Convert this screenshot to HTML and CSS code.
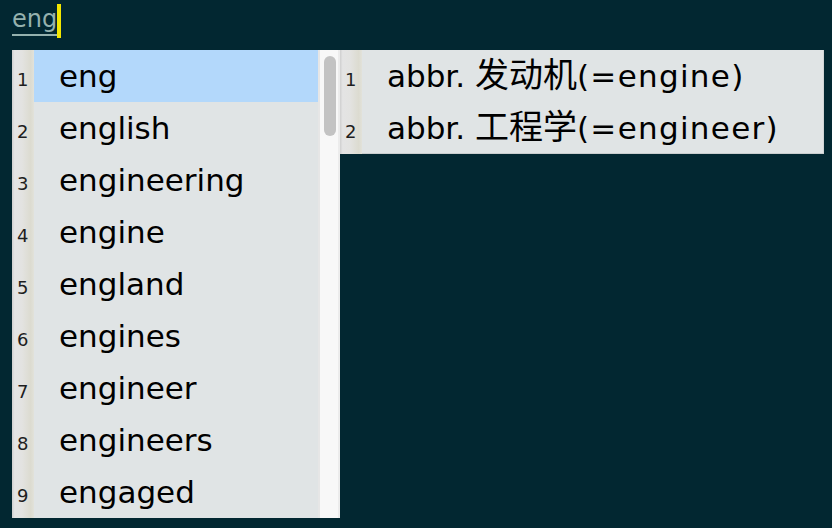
FILE: index.html
```html
<!DOCTYPE html>
<html>
<head>
<meta charset="utf-8">
<link rel="stylesheet" href="styles.css">
</head>
<body>
<div class="app">
  <div class="input"><span class="typed">eng</span><span class="caret"></span></div>
  <div class="popups">
    <div class="list">
      <div class="rows">
        <div class="row selected"><span class="num">1</span><span class="word">eng</span></div>
        <div class="row"><span class="num">2</span><span class="word">english</span></div>
        <div class="row"><span class="num">3</span><span class="word">engineering</span></div>
        <div class="row"><span class="num">4</span><span class="word">engine</span></div>
        <div class="row"><span class="num">5</span><span class="word">england</span></div>
        <div class="row"><span class="num">6</span><span class="word">engines</span></div>
        <div class="row"><span class="num">7</span><span class="word">engineer</span></div>
        <div class="row"><span class="num">8</span><span class="word">engineers</span></div>
        <div class="row"><span class="num">9</span><span class="word">engaged</span></div>
      </div>
      <div class="scrollbar"><div class="thumb"></div></div>
    </div>
    <div class="detail">
      <div class="row"><span class="num">1</span><span class="word">abbr. <span class="cjk">发动机</span><span class="tail">(=engine)</span></span></div>
      <div class="row"><span class="num">2</span><span class="word">abbr. <span class="cjk">工程学</span><span class="tail">(=engineer)</span></span></div>
    </div>
  </div>
</div>
</body>
</html>
```

FILE: styles.css
```css
html, body {
  margin: 0;
  padding: 0;
  background: #022731;
  width: 832px;
  height: 528px;
  overflow: hidden;
}
.app {
  padding: 0 12px;
  font-family: "DejaVu Sans", "Noto Sans CJK SC", sans-serif;
}
.input {
  height: 50px;
  display: flex;
  align-items: flex-start;
}
.typed {
  margin-top: 4px;
  font-size: 24px;
  line-height: 30px;
  color: #95b1ae;
  border-bottom: 2px solid #95b1ae;
}
.caret {
  margin-top: 4px;
  width: 4px;
  height: 34px;
  background: #f2e600;
}
.popups {
  display: flex;
  align-items: flex-start;
}
.list {
  display: flex;
  flex: none;
  width: 328px;
  height: 468px;
  background: #e0e4e5;
}
.rows {
  flex: 1;
}
.row {
  display: flex;
  height: 52px;
  background: #e0e4e5;
}
.row.selected .word {
  background: #b3d8fb;
}
.num {
  width: 22px;
  flex: none;
  box-sizing: border-box;
  padding-left: 5px;
  padding-top: 4px;
  font-size: 18px;
  line-height: 52px;
  color: #1e1e1e;
  background: linear-gradient(to right, #cfcfcf 0, #e4e4e4 12%, #e3e3e1 45%, #dcdbd0 85%, #e2e2da 100%);
}
.word {
  flex: 1;
  padding-left: 25px;
  font-size: 31px;
  line-height: 52px;
  color: #000;
  white-space: nowrap;
}
.cjk {
  font-family: "Noto Sans CJK SC", sans-serif;
  font-size: 34px;
  line-height: 1;
}
.tail {
  letter-spacing: 1.3px;
}
.scrollbar {
  width: 22px;
  box-sizing: border-box;
  background: #f8f8f8;
  border-left: 2px solid #e6e6e6;
  border-right: 2px solid #ececec;
  padding: 6px 0 0 4px;
}
.thumb {
  width: 12px;
  height: 80px;
  border-radius: 6px;
  background: #c3c3c3;
}
.detail {
  flex: none;
  width: 484px;
  background: #e0e4e5;
  box-shadow: inset 0 -1px 0 #c9cdce, inset -1px 0 0 #d0d4d5;
}
.detail .row {
  background: transparent;
}
```
